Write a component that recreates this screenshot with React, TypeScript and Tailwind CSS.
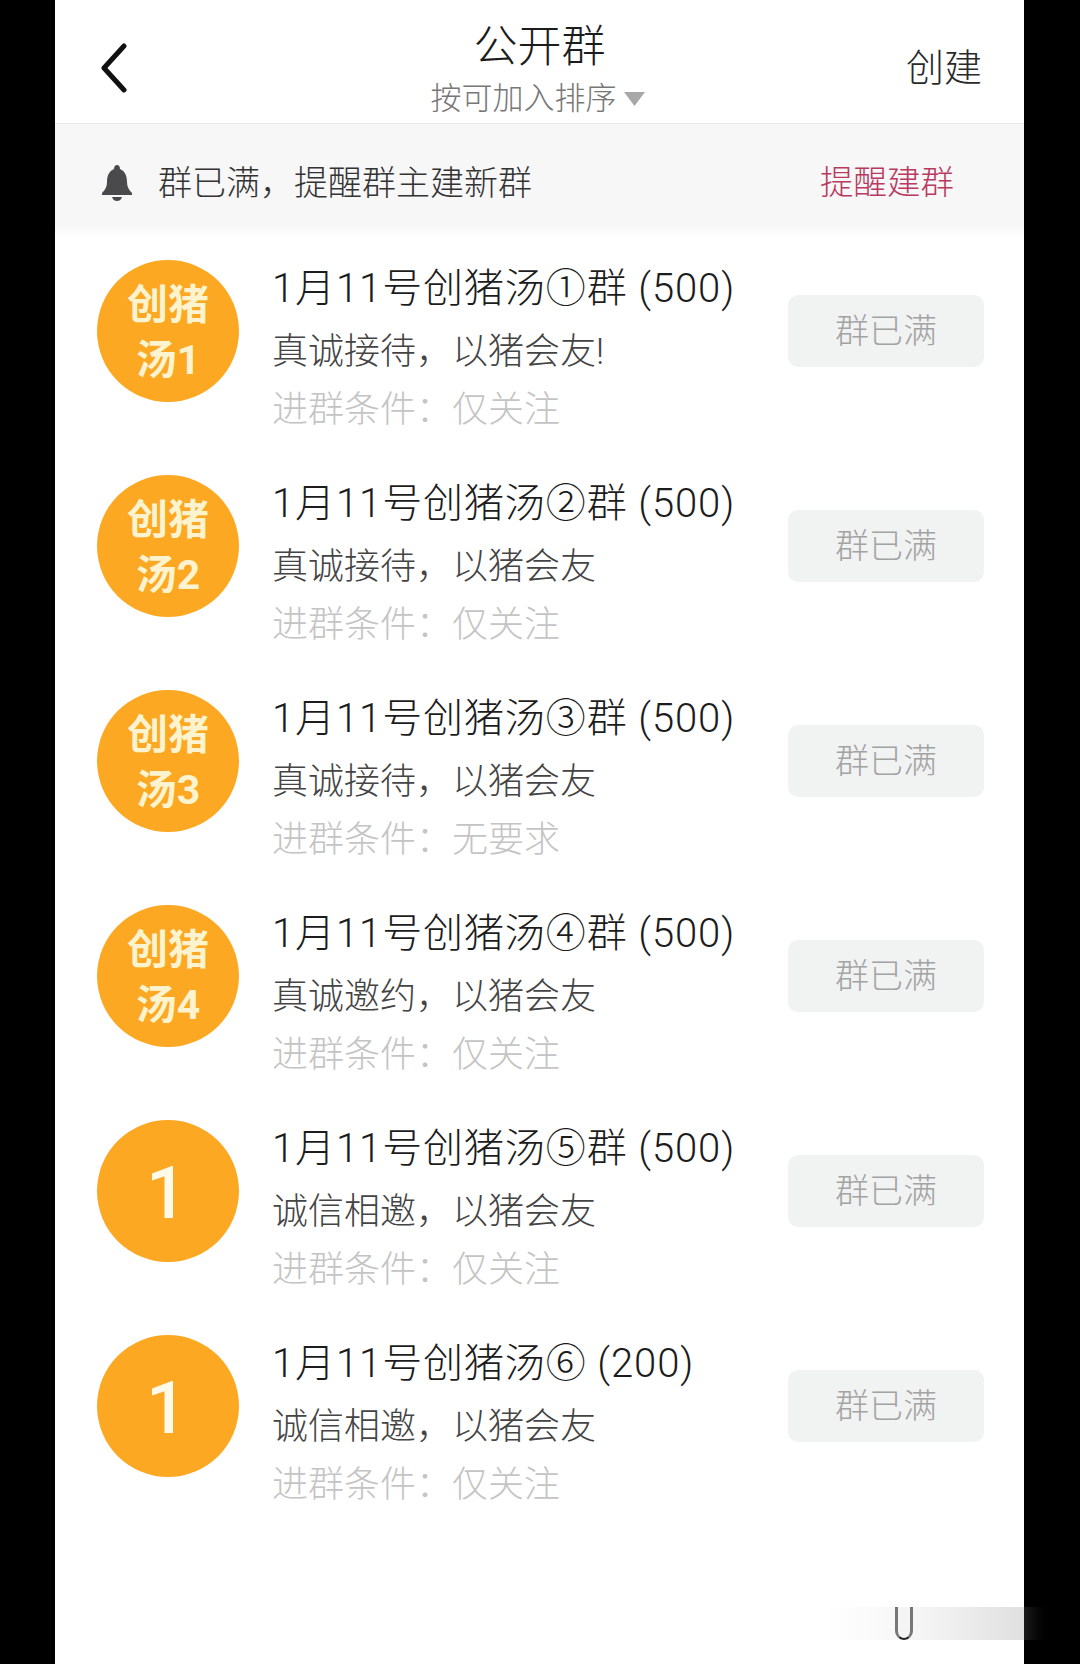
const FONT = "font-['Roboto','Noto_Sans_CJK_SC',sans-serif]"

type Group = {
  badge: [string, string] | null
  title: string
  slogan: string
  rule: string
}

const GROUPS: Group[] = [
  { badge: ['创猪', '汤1'], title: '1月11号创猪汤①群 (500)', slogan: '真诚接待\uFF0C以猪会友!', rule: '仅关注' },
  { badge: ['创猪', '汤2'], title: '1月11号创猪汤②群 (500)', slogan: '真诚接待\uFF0C以猪会友', rule: '仅关注' },
  { badge: ['创猪', '汤3'], title: '1月11号创猪汤③群 (500)', slogan: '真诚接待\uFF0C以猪会友', rule: '无要求' },
  { badge: ['创猪', '汤4'], title: '1月11号创猪汤④群 (500)', slogan: '真诚邀约\uFF0C以猪会友', rule: '仅关注' },
  { badge: null, title: '1月11号创猪汤⑤群 (500)', slogan: '诚信相邀\uFF0C以猪会友', rule: '仅关注' },
  { badge: null, title: '1月11号创猪汤⑥ (200)', slogan: '诚信相邀\uFF0C以猪会友', rule: '仅关注' },
]

function Avatar({ badge }: { badge: Group['badge'] }) {
  return (
    <div className="mt-[22px] flex h-[142px] w-[142px] shrink-0 flex-col items-center justify-center rounded-full bg-[#fca822] text-[#fdf3cf]">
      {badge ? (
        <div className="flex flex-col items-center pt-[4px]">
          <span className="text-[41px] leading-[55px] font-bold">{badge[0]}</span>
          <span className="text-[41px] leading-[55px] font-bold">{badge[1]}</span>
        </div>
      ) : (
        <span className="pt-[6px] pr-[3px] text-[72px] leading-none font-medium text-[#fff9ea]">1</span>
      )}
    </div>
  )
}

function GroupRow({ group }: { group: Group }) {
  return (
    <div className="flex h-[215px] items-start pl-[42px]">
      <Avatar badge={group.badge} />
      <div className="ml-[33px] flex w-[516px] shrink-0 flex-col pt-[17px]">
        <p className="text-[40px] leading-[67px] tracking-[0.9px] font-light whitespace-nowrap text-[#1c1c1c]">{group.title}</p>
        <p className="text-[36px] leading-[60px] font-light whitespace-nowrap text-[#444444]">{group.slogan}</p>
        <p className="text-[36px] leading-[56px] font-light whitespace-nowrap text-[#c4c4c4]">{'进群条件\uFF1A'}{group.rule}</p>
      </div>
      <div className="mt-[57px] flex h-[72px] w-[196px] shrink-0 items-center justify-center rounded-[10px] bg-[#f1f2f2] text-[34px] font-light text-[#a3a3a3]">
        群已满
      </div>
    </div>
  )
}

export default function App() {
  return (
    <div className={`flex h-[1664px] w-[1080px] overflow-hidden bg-black ${FONT}`}>
      <div className="relative ml-[55px] h-full w-[969px] bg-white">
        {/* Header */}
        <header className="grid h-[124px] grid-cols-[1fr_auto_1fr] border-b border-[#e8e8e8] pl-[45px] pr-[42px]">
          <div className="flex items-center pt-[12px]">
            <svg width="27" height="50" viewBox="0 0 27 50" fill="none" aria-hidden="true">
              <path d="M24 3 L4 25 L24 47" stroke="#111111" strokeWidth="5" strokeLinecap="round" strokeLinejoin="round" />
            </svg>
          </div>
          <div className="flex flex-col items-center pt-[17px]">
            <h1 className="-ml-[3px] text-[44px] leading-[60px] font-light text-[#1c1c1c]">公开群</h1>
            <div className="-ml-[7px] flex items-center text-[31px] leading-[44px] font-light text-[#777777]">
              按可加入排序
              <svg className="ml-[7px]" width="21" height="14" viewBox="0 0 21 14" aria-hidden="true">
                <path d="M0 0 H21 L10.5 14 Z" fill="#a8a8a8" />
              </svg>
            </div>
          </div>
          <div className="flex items-center justify-end pt-[14px] text-[38px] font-light text-[#2a2a2a]">创建</div>
        </header>

        {/* Notice */}
        <div className="flex h-[114px] items-center justify-between bg-linear-to-b from-[#f7f7f8] via-[#f7f7f8] via-88% to-white pl-[47px] pr-[70px] pt-[4px]">
          <div className="flex items-center">
            <svg width="30" height="36" viewBox="0 0 30 36" aria-hidden="true">
              <path d="M15 0 C17 0 18 2 18 4 C23 6 25 11 25 17 C25 22 27 25 30 28 L30 30 L0 30 L0 28 C3 25 5 22 5 17 C5 11 7 6 12 4 C12 2 13 0 15 0 Z" fill="#4a4a4c" />
              <path d="M10 32 H20 C19 35 17 36 15 36 C13 36 11 35 10 32 Z" fill="#4a4a4c" />
            </svg>
            <span className="ml-[26px] text-[34px] font-light text-[#333333]">{'群已满\uFF0C提醒群主建新群'}</span>
          </div>
          <span className="text-[33.5px] font-light text-[#b93a5e]">提醒建群</span>
        </div>

        {/* Group list */}
        <div className="flex flex-col">
          {GROUPS.map((group) => (
            <GroupRow key={group.title} group={group} />
          ))}
        </div>

        {/* Blurred home indicator smear */}
        <div className="absolute top-[1607px] left-[770px] h-[33px] w-[199px] bg-linear-to-r from-white via-[#f3f3f3] to-[#dcdcdc] opacity-90" />
        <div className="absolute top-[1607px] left-[840px] h-[33px] w-[18px] rounded-b-[9px] border-x-[3px] border-b-2 border-x-[#777777] border-b-[#222222] bg-[#f4f4f4]" />
        <div className="absolute top-[1607px] left-[969px] h-[33px] w-[31px] bg-linear-to-r from-[#1c1c1c] to-black" />
      </div>
    </div>
  )
}
